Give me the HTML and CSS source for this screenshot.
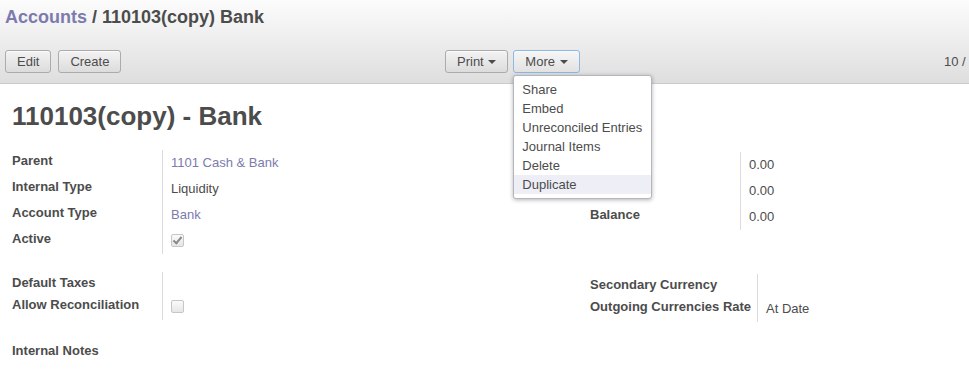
FILE: index.html
```html
<!DOCTYPE html>
<html lang="en">
<head>
    <meta charset="UTF-8">
    <title>Accounts / 110103(copy) Bank</title>
    <link rel="stylesheet" href="styles.css">
</head>
<body>
    <div class="page">
        <div class="header">
            <h2 class="crumbs"><a href="#">Accounts</a> / 110103(copy) Bank</h2>
            <div class="toolbar">
                <div class="main-buttons">
                    <button>Edit</button>
                    <button>Create</button>
                </div>
                <div class="sidebar">
                    <button>Print <span class="caret"></span></button>
                    <div class="more">
                        <button class="focused">More <span class="caret"></span></button>
                        <ul class="menu">
                            <li>Share</li>
                            <li>Embed</li>
                            <li>Unreconciled Entries</li>
                            <li>Journal Items</li>
                            <li>Delete</li>
                            <li class="active">Duplicate</li>
                        </ul>
                    </div>
                </div>
                <div class="pager">10 /</div>
            </div>
        </div>

        <div class="sheet">
            <h1>110103(copy) - Bank</h1>

            <div class="cols">
                <div class="group">
                    <div class="label">Parent</div>
                    <div class="value"><a href="#">1101 Cash &amp; Bank</a></div>
                    <div class="label">Internal Type</div>
                    <div class="value">Liquidity</div>
                    <div class="label">Account Type</div>
                    <div class="value"><a href="#">Bank</a></div>
                    <div class="label">Active</div>
                    <div class="value"><span class="check checked"></span></div>
                </div>
                <div class="group shifted">
                    <div class="label">Debit</div>
                    <div class="value">0.00</div>
                    <div class="label">Credit</div>
                    <div class="value">0.00</div>
                    <div class="label">Balance</div>
                    <div class="value">0.00</div>
                </div>
            </div>

            <div class="cols second">
                <div class="group two">
                    <div class="label">Default Taxes</div>
                    <div class="value"></div>
                    <div class="label">Allow Reconciliation</div>
                    <div class="value"><span class="check"></span></div>
                </div>
                <div class="group two wide shifted">
                    <div class="label">Secondary Currency</div>
                    <div class="value"></div>
                    <div class="label">Outgoing Currencies Rate</div>
                    <div class="value">At Date</div>
                </div>
            </div>

            <div class="notes">Internal Notes</div>
        </div>
    </div>
</body>
</html>
```

FILE: styles.css
```css
body {
    margin: 0;
    font-family: "Liberation Sans", Arial, sans-serif;
    font-size: 13px;
    color: #4c4c4c;
    background-color: #fff;
    overflow: hidden;
}

a {
    color: #7c7bad;
    text-decoration: none;
}

.page {
    width: 1180px;
}

.header {
    height: 83px;
    border-bottom: 1px solid #cacaca;
    background: linear-gradient(#fcfcfc, #dedede);
}

.crumbs {
    margin: 0;
    padding: 6px 0 0 5px;
    font-size: 18px;
    line-height: 22px;
    font-weight: bold;
    color: #4c4c4c;
}

.toolbar {
    display: flex;
    align-items: center;
    margin-top: 22px;
}

.main-buttons {
    display: flex;
    gap: 7px;
    width: 445px;
    padding-left: 5px;
    box-sizing: border-box;
}

.sidebar {
    display: flex;
    gap: 5px;
    width: 499px;
}

.pager {
    white-space: nowrap;
}

button {
    height: 23px;
    padding: 0 11px;
    border: 1px solid #ababab;
    border-radius: 3px;
    background: linear-gradient(#f3f3f3, #dcdcdc);
    font-family: "Liberation Sans", Arial, sans-serif;
    font-size: 13px;
    color: #4c4c4c;
    box-shadow: 0 1px 1px rgba(255, 255, 255, 0.6) inset;
}

button.focused {
    border-color: #8cb8e6;
    background: linear-gradient(#f6f6f6, #e2e2e2);
}

.caret {
    display: inline-block;
    width: 0;
    height: 0;
    margin-left: 1px;
    vertical-align: 2px;
    border-top: 4px solid #4c4c4c;
    border-left: 4px solid transparent;
    border-right: 4px solid transparent;
}

.more {
    position: relative;
}

.menu {
    position: absolute;
    top: 25px;
    left: 0;
    z-index: 10;
    width: 139px;
    margin: 0;
    padding: 4px 0;
    list-style: none;
    background-color: #fff;
    border: 1px solid #b5b5bd;
    border-radius: 3px;
    box-sizing: border-box;
    box-shadow: 0 1px 4px rgba(0, 0, 0, 0.3);
}

.menu li {
    padding: 0 8px;
    line-height: 19px;
    white-space: nowrap;
}

.menu li.active {
    background-color: #eeeef7;
}

.sheet {
    padding: 0 12px;
}

h1 {
    margin: 16px 0 18px;
    font-size: 26px;
    line-height: 32px;
    color: #4c4c4c;
}

.cols {
    display: grid;
    grid-template-columns: 1fr 1fr;
    align-items: start;
}

.cols.second {
    margin-top: 18px;
}

.group {
    display: grid;
    grid-template-columns: 150px 1fr;
    grid-auto-rows: 26px;
}

.group.two {
    grid-template-rows: 22px 26px;
}

.group.wide {
    grid-template-columns: 167px 1fr;
}

.group.shifted {
    margin-top: 2px;
}

.label {
    padding-top: 3px;
    font-weight: bold;
    white-space: nowrap;
}

.value {
    padding: 5px 0 0 8px;
    border-left: 1px solid #dcdcdc;
}

.check {
    display: inline-block;
    width: 11px;
    height: 11px;
    margin-top: 1px;
    border: 1px solid #c6c6c6;
    border-radius: 2px;
    background: linear-gradient(#fafafa, #e6e6e6);
    position: relative;
}

.check.checked::after {
    content: "";
    position: absolute;
    left: 3px;
    top: 0;
    width: 3px;
    height: 7px;
    border-right: 2px solid #8a8a8a;
    border-bottom: 2px solid #8a8a8a;
    transform: rotate(40deg);
}

.notes {
    margin-top: 21px;
    font-weight: bold;
}
```
